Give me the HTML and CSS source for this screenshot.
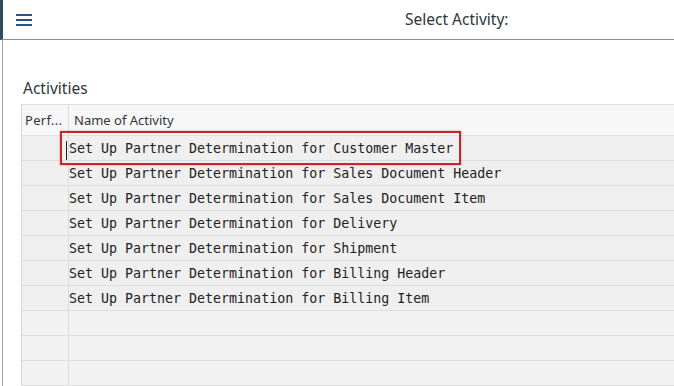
FILE: index.html
```html
<!DOCTYPE html>
<html lang="en">
<head>
  <meta charset="UTF-8" />
  <title>Select Activity</title>
  <link rel="stylesheet" href="styles.css">
</head>
<body>

  <header class="topbar">
    <button class="menu-btn" aria-label="Menu">
      <svg width="16" height="12" viewBox="0 0 16 12">
        <rect x="0" y="0" width="16" height="2" fill="#2b5287"/>
        <rect x="0" y="5" width="16" height="2" fill="#2b5287"/>
        <rect x="0" y="10" width="16" height="2" fill="#2b5287"/>
      </svg>
    </button>
    <div class="title">Select Activity:</div>
  </header>

  <main class="content">
    <h2 class="section-title">Activities</h2>

    <div class="grid">
      <div class="row head">
        <div class="cell perf">Perf...</div>
        <div class="cell name">Name of Activity</div>
      </div>
      <div class="row">
        <div class="cell perf"></div>
        <div class="cell name mono"><span class="cursor"></span><span class="marked">Set Up Partner Determination for Customer Master</span></div>
      </div>
      <div class="row">
        <div class="cell perf"></div>
        <div class="cell name mono">Set Up Partner Determination for Sales Document Header</div>
      </div>
      <div class="row">
        <div class="cell perf"></div>
        <div class="cell name mono">Set Up Partner Determination for Sales Document Item</div>
      </div>
      <div class="row">
        <div class="cell perf"></div>
        <div class="cell name mono">Set Up Partner Determination for Delivery</div>
      </div>
      <div class="row">
        <div class="cell perf"></div>
        <div class="cell name mono">Set Up Partner Determination for Shipment</div>
      </div>
      <div class="row">
        <div class="cell perf"></div>
        <div class="cell name mono">Set Up Partner Determination for Billing Header</div>
      </div>
      <div class="row">
        <div class="cell perf"></div>
        <div class="cell name mono">Set Up Partner Determination for Billing Item</div>
      </div>
      <div class="row empty">
        <div class="cell perf"></div>
        <div class="cell name"></div>
      </div>
      <div class="row empty">
        <div class="cell perf"></div>
        <div class="cell name"></div>
      </div>
      <div class="row empty">
        <div class="cell perf"></div>
        <div class="cell name"></div>
      </div>
    </div>
  </main>

</body>
</html>
```

FILE: styles.css
```css
* { box-sizing: border-box; margin: 0; padding: 0; }

html, body {
  height: 100%;
  overflow: hidden;
}

body {
  font-family: 'Noto Sans', 'Open Sans', sans-serif;
  background: #fff;
  color: #32363a;
}

.topbar {
  height: 40px;
  display: flex;
  align-items: center;
  border-left: 3px solid #354a5f;
  border-bottom: 1px solid #89919a;
}

.menu-btn {
  background: none;
  border: none;
  margin-left: 13px;
  width: 16px;
  height: 12px;
  display: flex;
}

.title {
  margin-left: 373px;
  font-size: 15.5px;
  color: #32363a;
  padding-bottom: 1px;
}

.content {
  margin-left: 2px;
  border-left: 1px solid #9aa1a8;
  height: calc(100% - 40px);
  padding: 37px 0 0 18px;
}

.section-title {
  font-size: 15.5px;
  font-weight: normal;
  color: #32363a;
  margin-left: 2px;
  height: 27px;
}

.grid {
  border-left: 1px solid #d9d9d9;
  border-top: 1px solid #dedede;
}

.row {
  display: flex;
  height: 25px;
  border-bottom: 1px solid #dedede;
  background: #efefef;
}

.row.head {
  height: 31px;
  background: #f7f7f7;
  border-bottom: 1px solid #e2e2e2;
}

.row.empty { background: #f2f2f2; }

.cell {
  display: flex;
  align-items: center;
  font-size: 13px;
  white-space: nowrap;
}

.perf {
  width: 47px;
  flex-shrink: 0;
  padding-left: 3px;
  letter-spacing: 0.3px;
  border-right: 1px solid #dcdcdc;
}

.name {
  flex: 1;
  padding-left: 5px;
  position: relative;
}

.mono {
  font-family: 'DejaVu Sans Mono', 'Liberation Mono', monospace;
  font-size: 13.3px;
  color: #222;
  padding-left: 0;
}

.cursor {
  display: inline-block;
  width: 1px;
  height: 19px;
  background: #222;
  margin: 5px 0 0 -3px;
  align-self: flex-start;
}

.marked {
  position: relative;
  margin-left: 2px;
}

.marked::after {
  content: "";
  position: absolute;
  left: -9px;
  right: -8px;
  top: -10px;
  bottom: -9px;
  border: 2px solid #c4262e;
  box-shadow: 0 0 2px rgba(196, 38, 46, 0.5);
}
```
